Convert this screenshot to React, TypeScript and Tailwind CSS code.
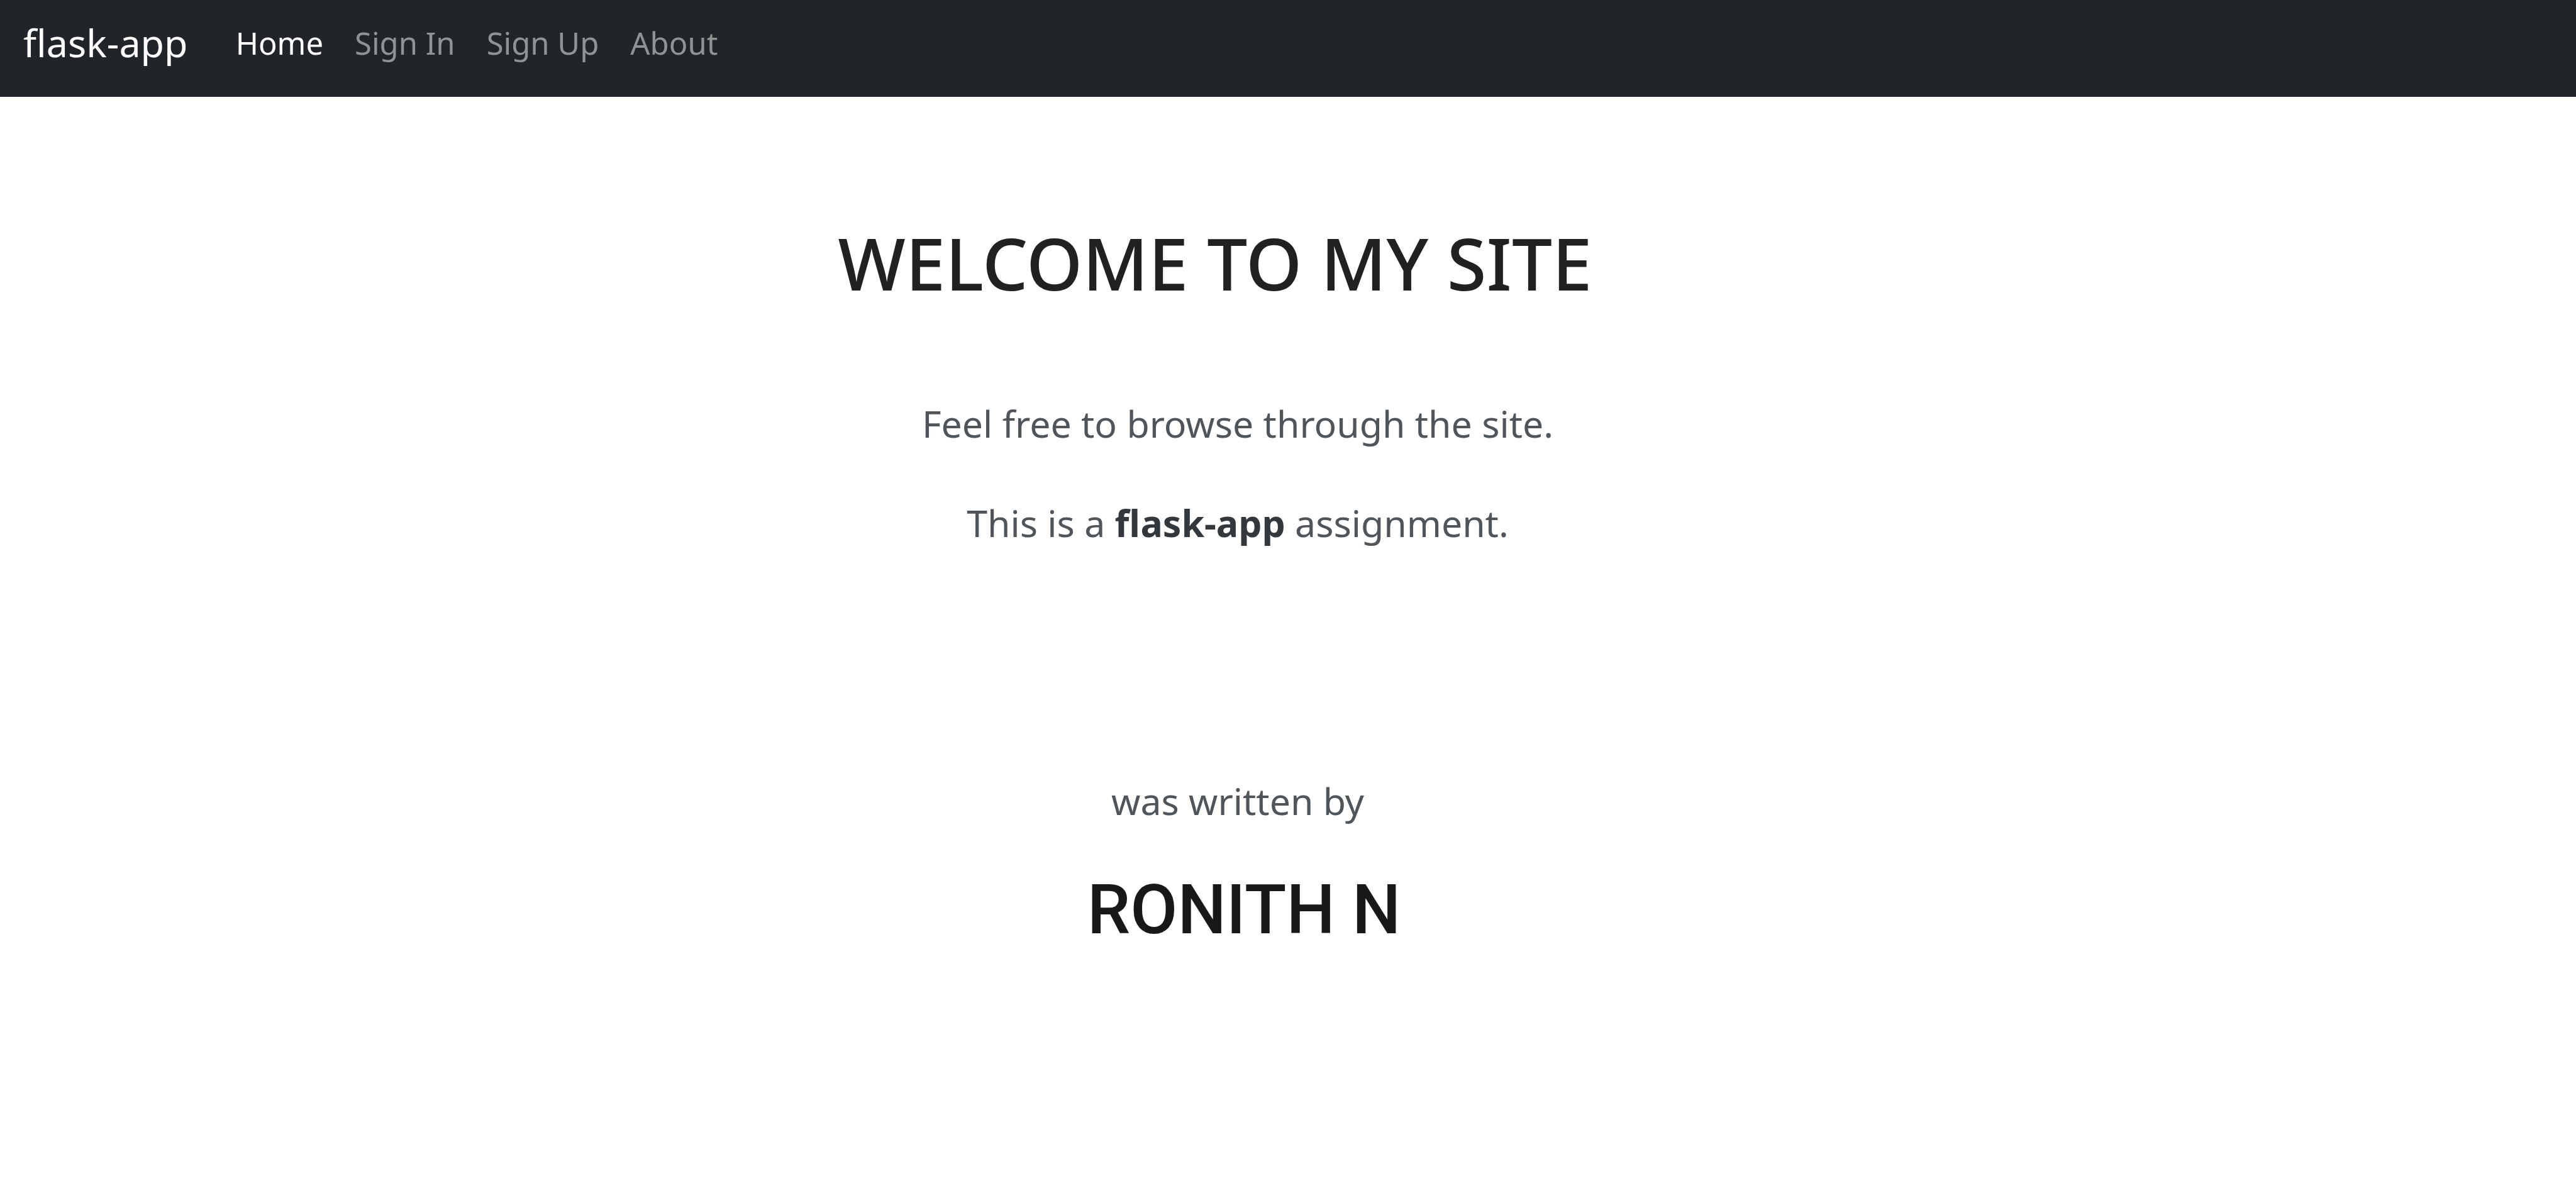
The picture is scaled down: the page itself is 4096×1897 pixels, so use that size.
const links = ["Home", "Sign In", "Sign Up", "About"];

export default function App() {
  return (
    <div className="min-h-screen bg-white font-['Noto_Sans',sans-serif]">
      <nav className="flex gap-[76px] bg-[#212529] px-[37px] pt-[23px] pb-[41px] leading-[90px]">
        <a href="#home" className="text-[61px] text-white">flask-app</a>
        <ul className="flex gap-[50px] text-[49px] text-[#909294]">
          {links.map((label) => (
            <li key={label}>
              <a
                href="#page"
                aria-current={label === "Home" ? "page" : undefined}
                className="aria-[current=page]:text-white"
              >
                {label}
              </a>
            </li>
          ))}
        </ul>
      </nav>
      <main className="pt-[189px] pr-[160px] text-center text-[59px] leading-[80px] text-[#50555a]">
        <h1 className="pr-[72px] text-[114px] font-medium leading-[150px] text-[#212121]">
          WELCOME TO MY SITE
        </h1>
        <p className="mt-[140px]">Feel free to browse through the site.</p>
        <p className="mt-[78px]">
          This is a <strong className="text-[#33383d]">flask-app</strong> assignment.
        </p>
        <p className="mt-[362px]">was written by</p>
        <h2 className="mt-[64px] pl-[20px] font-['Roboto',sans-serif] text-[109px] font-medium leading-[140px] text-[#18181a]">
          RONITH N
        </h2>
      </main>
    </div>
  );
}
